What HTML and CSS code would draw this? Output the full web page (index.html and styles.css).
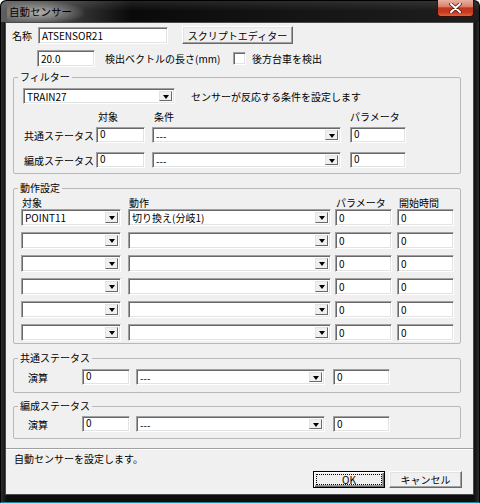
FILE: index.html
```html
<!DOCTYPE html>
<html lang="ja">
<head>
<meta charset="UTF-8" />
<title>自動センサー</title>
<link rel="stylesheet" href="styles.css">
</head>
<body>
<div class="window">
  <!-- タイトルバー -->
  <div class="titlebar">
    <span class="title">自動センサー</span>
    <span class="close">
      <svg width="13" height="10" viewBox="0 0 13 10">
        <path d="M2 1 L11 9 M11 1 L2 9" stroke="#5a1a10" stroke-width="3.6" stroke-linecap="round"/>
        <path d="M2 1 L11 9 M11 1 L2 9" stroke="#fff" stroke-width="2" stroke-linecap="round"/>
      </svg>
    </span>
  </div>

  <div class="client">
    <!-- 名称 -->
    <div class="row row-name">
      <span class="lbl-name">名称</span>
      <div class="edit w-name">ATSENSOR21</div>
      <div class="btn btn-script">スクリプトエディター</div>
    </div>
    <div class="row row-len">
      <div class="edit w-len">20.0</div>
      <span class="lbl-len">検出ベクトルの長さ(mm)</span>
      <span class="check"></span>
      <span class="lbl-check">後方台車を検出</span>
    </div>

    <!-- フィルター -->
    <fieldset class="group filter">
      <legend>フィルター</legend>
      <div class="filter-top">
        <div class="combo w-train"><span class="val">TRAIN27</span><span class="drop"></span></div>
        <span class="hint">センサーが反応する条件を設定します</span>
      </div>
      <div class="cond-grid cond-head">
        <span></span><span class="head">対象</span><span class="head">条件</span><span class="head">パラメータ</span>
      </div>
      <div class="cond-grid cond-row">
        <span class="rlabel">共通ステータス</span>
        <div class="edit w-obj">0</div>
        <div class="combo w-cond"><span class="val">---</span><span class="drop"></span></div>
        <div class="edit w-param">0</div>
      </div>
      <div class="cond-grid cond-row second">
        <span class="rlabel">編成ステータス</span>
        <div class="edit w-obj">0</div>
        <div class="combo w-cond"><span class="val">---</span><span class="drop"></span></div>
        <div class="edit w-param">0</div>
      </div>
    </fieldset>

    <!-- 動作設定 -->
    <fieldset class="group action">
      <legend>動作設定</legend>
      <div class="act-grid act-head">
        <span>対象</span><span>動作</span><span>パラメータ</span><span class="head-time">開始時間</span>
      </div>
      <div class="act-grid act-row">
        <div class="combo w-target"><span class="val">POINT11</span><span class="drop"></span></div>
        <div class="combo w-act"><span class="val">切り換え(分岐1)</span><span class="drop"></span></div>
        <div class="edit w-aparam">0</div>
        <div class="edit w-time">0</div>
      </div>
      <div class="act-grid act-row">
        <div class="combo w-target"><span class="val"></span><span class="drop"></span></div>
        <div class="combo w-act"><span class="val"></span><span class="drop"></span></div>
        <div class="edit w-aparam">0</div>
        <div class="edit w-time">0</div>
      </div>
      <div class="act-grid act-row">
        <div class="combo w-target"><span class="val"></span><span class="drop"></span></div>
        <div class="combo w-act"><span class="val"></span><span class="drop"></span></div>
        <div class="edit w-aparam">0</div>
        <div class="edit w-time">0</div>
      </div>
      <div class="act-grid act-row">
        <div class="combo w-target"><span class="val"></span><span class="drop"></span></div>
        <div class="combo w-act"><span class="val"></span><span class="drop"></span></div>
        <div class="edit w-aparam">0</div>
        <div class="edit w-time">0</div>
      </div>
      <div class="act-grid act-row">
        <div class="combo w-target"><span class="val"></span><span class="drop"></span></div>
        <div class="combo w-act"><span class="val"></span><span class="drop"></span></div>
        <div class="edit w-aparam">0</div>
        <div class="edit w-time">0</div>
      </div>
      <div class="act-grid act-row">
        <div class="combo w-target"><span class="val"></span><span class="drop"></span></div>
        <div class="combo w-act"><span class="val"></span><span class="drop"></span></div>
        <div class="edit w-aparam">0</div>
        <div class="edit w-time">0</div>
      </div>
    </fieldset>

    <!-- 共通ステータス -->
    <fieldset class="group calc calc-common">
      <legend>共通ステータス</legend>
      <div class="calc-grid">
        <span class="rlabel">演算</span>
        <div class="edit w-cobj">0</div>
        <div class="combo w-cond"><span class="val">---</span><span class="drop"></span></div>
        <div class="edit w-aparam">0</div>
      </div>
    </fieldset>

    <!-- 編成ステータス -->
    <fieldset class="group calc calc-train">
      <legend>編成ステータス</legend>
      <div class="calc-grid">
        <span class="rlabel">演算</span>
        <div class="edit w-cobj">0</div>
        <div class="combo w-cond"><span class="val">---</span><span class="drop"></span></div>
        <div class="edit w-aparam">0</div>
      </div>
    </fieldset>

    <div class="separator"></div>
    <div class="status">自動センサーを設定します。</div>
    <div class="buttons">
      <div class="btn btn-ok">OK</div>
      <div class="btn btn-cancel">キャンセル</div>
    </div>
  </div>
</div>
</body>
</html>
```

FILE: styles.css
```css
* {
    box-sizing: border-box;
}

body {
    margin: 0;
    background: #fff;
    font-family: "Noto Sans CJK JP", "Liberation Sans", sans-serif;
    font-size: 10px;
    color: #000;
}

/* 枠 */
.window {
    width: 480px;
    height: 503px;
    padding: 0 5px 7px 4px;
    display: flex;
    flex-direction: column;
    background: linear-gradient(to right, #2c2c2c, #0d0d0d 6px, #0d0d0d 473px, #2c2c2c);
    border: 1px solid #000;
    border-bottom-color: #1a8896;
    border-radius: 6px 6px 0 0;
}

.titlebar {
    height: 21px;
    display: flex;
    justify-content: space-between;
    align-items: flex-start;
    margin: 0 -5px 0 -4px;
    padding: 0 5px 0 4px;
    border-radius: 6px 6px 0 0;
    background:
        linear-gradient(rgba(255,255,255,0.10), rgba(255,255,255,0) 10px),
        linear-gradient(to right, #5e5e5e 0, #3a3a3a 70px, #0a0a0a 130px, #151515 300px, #1e1e1e 100%);
}

.title {
    margin-left: 2px;
    padding: 0 12px 0 2px;
    line-height: 21px;
    font-size: 10.5px;
    background: radial-gradient(ellipse at 40% 55%, rgba(210,210,210,0.75), rgba(150,150,150,0.35) 55%, rgba(120,120,120,0) 75%);
}

.close {
    width: 37px;
    height: 17px;
    margin-top: -1px;
    display: flex;
    align-items: center;
    justify-content: center;
    border: 1px solid #3a0e08;
    border-top: 0;
    border-radius: 0 0 4px 4px;
    background: linear-gradient(#eab1a3 0, #d98470 40%, #c2361f 50%, #c9381c 75%, #e2623e 100%);
}

.client {
    flex: 1;
    background: #f0f0f0;
    border: 1px solid #4a4a4a;
}

.row {
    display: flex;
    align-items: center;
}

.row-name {
    height: 18px;
    margin-top: 3px;
    padding-left: 6px;
}

.lbl-name {
    width: 26px;
}

.row-len {
    height: 17px;
    margin-top: 6px;
    padding-left: 31px;
}

.lbl-len {
    width: 128px;
    margin-left: 10px;
}

.lbl-check {
    margin-left: 6px;
}

/* 入力欄 */
.edit, .combo, .check {
    background: #fff;
    border-top: 1px solid #a0a0a0;
    border-left: 1px solid #a0a0a0;
    border-bottom: 1px solid #fff;
    border-right: 1px solid #fff;
    box-shadow: inset 1px 1px 0 #696969, inset -1px -1px 0 #e3e3e3;
}

.edit {
    height: 17px;
    padding-left: 3px;
    line-height: 15px;
}

.check {
    width: 13px;
    height: 13px;
}

.combo {
    height: 17px;
    display: flex;
    padding: 2px;
}

.combo .val {
    flex: 1;
    padding-left: 1px;
    line-height: 12px;
}

.drop {
    width: 13px;
    display: flex;
    align-items: center;
    justify-content: center;
    background: #f0f0f0;
    border-top: 1px solid #e3e3e3;
    border-left: 1px solid #e3e3e3;
    border-right: 1px solid #696969;
    border-bottom: 1px solid #696969;
}

.drop::after {
    content: "";
    border-left: 3px solid transparent;
    border-right: 3px solid transparent;
    border-top: 4px solid #000;
    margin-top: 1px;
}

/* ボタン */
.btn {
    height: 18px;
    display: flex;
    align-items: center;
    justify-content: center;
    background: #f0f0f0;
    border-top: 1px solid #fff;
    border-left: 1px solid #fff;
    border-right: 1px solid #696969;
    border-bottom: 1px solid #696969;
    box-shadow: inset -1px -1px 0 #a0a0a0, inset 1px 1px 0 #e3e3e3;
}

.btn-script {
    width: 111px;
    margin-left: 14px;
}

.w-name { width: 130px; }
.w-len { width: 58px; }
.w-train { width: 152px; height: 16px; }
.w-obj { width: 49px; height: 16px; }
.w-cond { width: 189px; height: 16px; }
.w-param { width: 56px; height: 16px; }
.w-target { width: 100px; }
.w-act { width: 203px; }
.w-aparam { width: 57px; }
.w-time { width: 57px; }
.w-cobj { width: 48px; height: 16px; }

.w-train .val, .w-cond .val, .w-obj, .w-param, .w-cobj {
    line-height: 12px;
}

.calc .w-aparam {
    height: 16px;
    line-height: 13px;
}

/* グループ */
.group {
    width: 448px;
    margin: 0 0 0 7px;
    border: 1px solid #b8b8b8;
    border-radius: 2px;
    min-width: 0;
}

.group legend {
    padding: 0 2px;
    line-height: 12px;
}

.filter {
    margin-top: 4px;
    padding: 5px 0 5px 9px;
}

.filter legend {
    margin-left: -5px;
}

.filter-top {
    display: flex;
    align-items: center;
}

.hint {
    margin-left: 16px;
}

.cond-grid {
    display: grid;
    grid-template-columns: 73px 56px 198px 56px;
    align-items: center;
}

.cond-head {
    margin-top: 7px;
    line-height: 12px;
}

.cond-head .head {
    padding-left: 2px;
}

.cond-head .head:last-child {
    padding-left: 0;
}

.rlabel {
    padding-left: 1px;
}

.cond-row {
    margin-top: 4px;
}

.cond-row.second {
    margin-top: 9px;
}

.action {
    margin-top: 8px;
    padding: 3px 0 2px 7px;
}

.action legend {
    margin-left: -3px;
}

.act-grid {
    display: grid;
    grid-template-columns: 107px 207px 62px 57px;
    align-items: center;
}

.act-head {
    line-height: 12px;
    padding-left: 1px;
}

.head-time {
    padding-left: 1px;
}

.act-row {
    margin-bottom: 6px;
}

.act-row:last-child {
    margin-bottom: 0;
}

.calc-common {
    margin-top: 8px;
    padding: 5px 0 7px 13px;
}

.calc-train {
    margin-top: 7px;
    padding: 4px 0 6px 13px;
}

.calc legend {
    margin-left: -9px;
}

.calc-grid {
    display: grid;
    grid-template-columns: 55px 54px 197px 57px;
    align-items: center;
}

.separator {
    margin-top: 9px;
    border-top: 1px solid #a0a0a0;
    border-bottom: 1px solid #fff;
}

.status {
    margin-top: 3px;
    padding-left: 8px;
    line-height: 12px;
}

.buttons {
    display: flex;
    justify-content: flex-end;
    gap: 4px;
    margin-top: 6px;
    padding-right: 11px;
}

.btn-ok {
    width: 72px;
    height: 17px;
    border: 1px solid #000;
    box-shadow: inset 1px 1px 0 #fff, inset -1px -1px 0 #696969, inset -2px -2px 0 #a0a0a0;
    outline: 1px dotted #000;
    outline-offset: -4px;
}

.btn-cancel {
    width: 73px;
    height: 17px;
}
```
